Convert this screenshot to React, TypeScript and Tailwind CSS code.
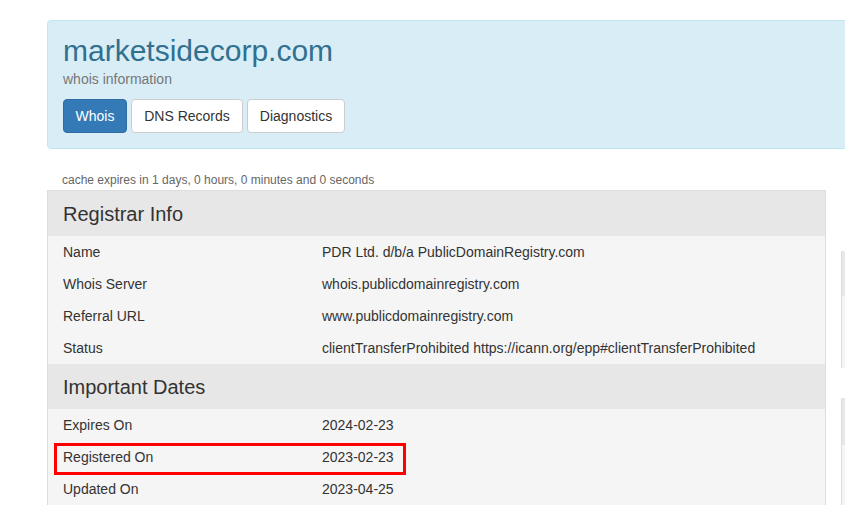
const registrar = [
  ["Name", "PDR Ltd. d/b/a PublicDomainRegistry.com"],
  ["Whois Server", "whois.publicdomainregistry.com"],
  ["Referral URL", "www.publicdomainregistry.com"],
  ["Status", "clientTransferProhibited https://icann.org/epp#clientTransferProhibited"],
];

const dates = [
  ["Expires On", "2024-02-23"],
  ["Registered On", "2023-02-23", true],
  ["Updated On", "2023-04-25"],
] as const;

function Row({ label, value, mark }: { label: string; value: string; mark?: boolean }) {
  return (
    <div className="relative flex h-8 items-center bg-[#f5f5f5] text-sm text-[#333]">
      <div className="w-[274px] pl-[15px]">{label}</div>
      <div>{value}</div>
      {mark && (
        <div className="absolute left-[6px] top-[2px] z-10 h-[32px] w-[352px] border-[3px] border-[#f00]" />
      )}
    </div>
  );
}

function SectionHead({ title }: { title: string }) {
  return (
    <div className="flex h-[45px] items-center bg-[#e6e7e6] pl-[15px] text-[20px] text-[#333]">
      {title}
    </div>
  );
}

export default function App() {
  return (
    <div
      className="h-[505px] w-[845px] overflow-hidden bg-white"
      style={{ fontFamily: '"Liberation Sans", Arial, sans-serif' }}
    >
      <div className="w-[1100px] pl-[47px] pt-5">
        <div className="w-[1000px] rounded border border-[#bce8f1] bg-[#d9edf7] px-[15px] pb-[15px] pt-[12px]">
          <h1 className="text-[30px] leading-[36px] text-[#31708f]">marketsidecorp.com</h1>
          <p className="text-sm leading-5 text-[#777]">whois information</p>
          <div className="mt-[10px] flex gap-1">
            <button className="h-[34px] w-[64px] rounded border border-[#2e6da4] bg-[#337ab7] text-sm text-white">
              Whois
            </button>
            <button className="h-[34px] w-[112px] rounded border border-[#ccc] bg-white text-sm text-[#333]">
              DNS Records
            </button>
            <button className="h-[34px] w-[98px] rounded border border-[#ccc] bg-white text-sm text-[#333]">
              Diagnostics
            </button>
          </div>
        </div>

        <div className="mt-[22px] flex gap-[15px]">
          <div className="w-[780px]">
            <div className="pl-[15px] text-xs leading-[19px] text-[#666]">
              cache expires in 1 days, 0 hours, 0 minutes and 0 seconds
            </div>
            <div className="border border-[#ddd]">
              <SectionHead title="Registrar Info" />
              {registrar.map(([l, v]) => (
                <Row key={l} label={l} value={v} />
              ))}
              <SectionHead title="Important Dates" />
              {dates.map((d) => (
                <Row key={d[0]} label={d[0]} value={d[1]} mark={d.length > 2} />
              ))}
            </div>
          </div>

          <div className="w-[260px] pt-[80px]">
            <div className="border-l border-[#ddd]">
              <div className="h-[45px] bg-[#e6e7e6]" />
              <div className="h-[72px] bg-[#f5f5f5]" />
            </div>
            <div className="mt-[30px] border-l border-[#ddd]">
              <div className="h-[47px] bg-[#e6e7e6]" />
              <div className="h-[72px] bg-[#f5f5f5]" />
            </div>
          </div>
        </div>
      </div>
    </div>
  );
}
